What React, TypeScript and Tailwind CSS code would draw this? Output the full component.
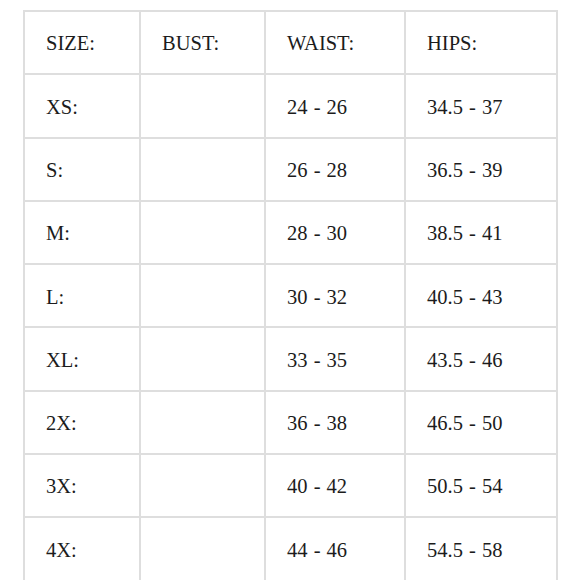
import React from "react";

const rows: [string, string, string, string][] = [
  ["SIZE:", "BUST:", "WAIST:", "HIPS:"],
  ["XS:", "", "24 - 26", "34.5 - 37"],
  ["S:", "", "26 - 28", "36.5 - 39"],
  ["M:", "", "28 - 30", "38.5 - 41"],
  ["L:", "", "30 - 32", "40.5 - 43"],
  ["XL:", "", "33 - 35", "43.5 - 46"],
  ["2X:", "", "36 - 38", "46.5 - 50"],
  ["3X:", "", "40 - 42", "50.5 - 54"],
  ["4X:", "", "44 - 46", "54.5 - 58"],
];

export default function App() {
  return (
    <div className="w-[580px] h-[580px] overflow-hidden bg-white font-['Liberation_Serif','Times_New_Roman',serif]">
      <div className="ml-[23px] mt-[10px] w-[535px] bg-[#dedede] p-[2px]">
        <div className="grid grid-cols-[114px_123px_138px_150px] gap-[2px]">
          {rows.flatMap((r, i) =>
            r.map((c, j) => (
              <div
                key={`${i}-${j}`}
                className="bg-white h-[61.3px] flex items-center pl-[21px] pt-[2px] text-[20.5px] leading-none text-[#1c1c1c] font-['Liberation_Serif','Times_New_Roman',serif] [word-spacing:1px]"
              >
                {c}
              </div>
            ))
          )}
        </div>
      </div>
    </div>
  );
}
